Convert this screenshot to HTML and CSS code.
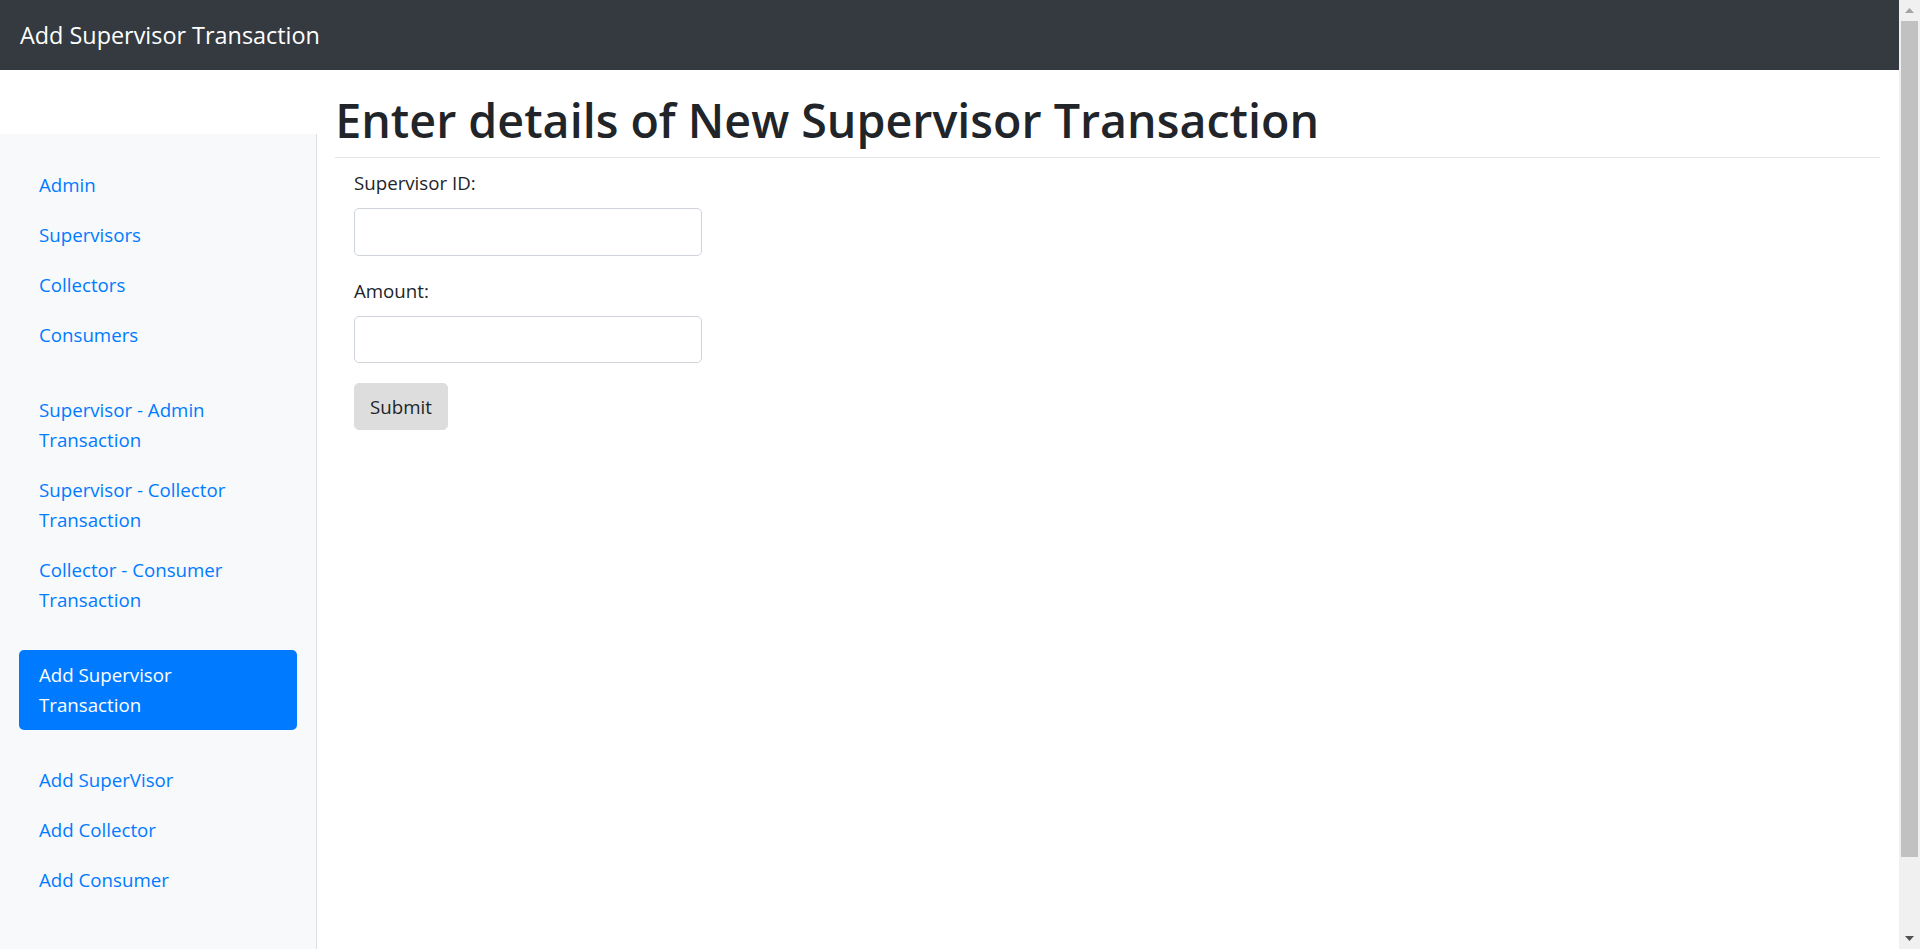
FILE: index.html
```html
<!DOCTYPE html>
<html lang="en">
<head>
<meta charset="utf-8">
<title>Add Supervisor Transaction</title>
<link rel="stylesheet" href="styles.css">
</head>
<body>
<nav class="navbar">
  <a class="brand" href="#">Add Supervisor Transaction</a>
</nav>
<div class="layout">
  <aside class="sidebar">
    <ul class="nav-group">
      <li><a class="nav-link" href="#">Admin</a></li>
      <li><a class="nav-link" href="#">Supervisors</a></li>
      <li><a class="nav-link" href="#">Collectors</a></li>
      <li><a class="nav-link" href="#">Consumers</a></li>
    </ul>
    <ul class="nav-group">
      <li><a class="nav-link" href="#">Supervisor - Admin<br>Transaction</a></li>
      <li><a class="nav-link" href="#">Supervisor - Collector<br>Transaction</a></li>
      <li><a class="nav-link" href="#">Collector - Consumer<br>Transaction</a></li>
    </ul>
    <ul class="nav-group">
      <li><a class="nav-link active" href="#">Add Supervisor<br>Transaction</a></li>
    </ul>
    <ul class="nav-group">
      <li><a class="nav-link" href="#">Add SuperVisor</a></li>
      <li><a class="nav-link" href="#">Add Collector</a></li>
      <li><a class="nav-link" href="#">Add Consumer</a></li>
    </ul>
    <ul class="nav-group last">
      <li><a class="nav-link" href="#">Logout</a></li>
    </ul>
  </aside>
  <main class="main">
    <h1 class="page-title">Enter details of New Supervisor Transaction</h1>
    <form class="form">
      <div class="form-group">
        <label class="label" for="sid">Supervisor ID:</label>
        <input class="input" id="sid" type="text">
      </div>
      <div class="form-group">
        <label class="label" for="amount">Amount:</label>
        <input class="input" id="amount" type="text">
      </div>
      <button class="btn" type="submit">Submit</button>
    </form>
  </main>
</div>
<div class="scrollbar" aria-hidden="true">
  <div class="sb-button">
    <svg width="9" height="5" viewBox="0 0 9 5"><polygon points="0,5 4.5,0 9,5" fill="#a3a3a3"/></svg>
  </div>
  <div class="sb-track">
    <div class="sb-thumb"></div>
  </div>
  <div class="sb-button">
    <svg width="9" height="5" viewBox="0 0 9 5"><polygon points="0,0 9,0 4.5,5" fill="#505050"/></svg>
  </div>
</div>
</body>
</html>
```

FILE: styles.css
```css
body {
  margin: 0 21px 0 0;
  font-family: "Open Sans", "Noto Sans", sans-serif;
  font-size: 18.7px;
  line-height: 30px;
  color: #212529;
  background: #fff;
}

.navbar {
  height: 70px;
  background: #343a40;
  display: flex;
  align-items: center;
  padding: 0 20px;
}
.brand {
  color: #fff;
  text-decoration: none;
  font-size: 23.4px;
  line-height: 36px;
}

.layout {
  display: flex;
  align-items: flex-start;
}

.sidebar {
  flex: 0 0 316.5px;
  box-sizing: border-box;
  margin-top: 64px;
  padding: 26px 19.5px 48px 19px;
  background: #f8f9fa;
  box-shadow: inset -1px 0 0 rgba(0, 0, 0, 0.1);
}
.nav-group {
  list-style: none;
  margin: 0 0 25px;
  padding: 0;
}
.nav-group.last {
  margin-bottom: 0;
}
.nav-link {
  display: block;
  padding: 10px 20px;
  line-height: 30px;
  color: #007bff;
  text-decoration: none;
  border-radius: 5px;
}
.nav-link.active {
  background: #007bff;
  color: #fff;
}

.main {
  flex: 1;
  min-width: 0;
  padding: 0 18.75px;
}
.page-title {
  margin: 20px 0 10px;
  padding-bottom: 7px;
  border-bottom: 1px solid #e3e5e8;
  font-size: 46.6px;
  font-weight: 600;
  line-height: 60px;
  color: #212529;
}

.form {
  padding: 0 18.75px;
}
.form-group {
  margin-bottom: 20px;
}
.label {
  display: block;
  margin-bottom: 10px;
  line-height: 30px;
}
.input {
  display: block;
  box-sizing: border-box;
  width: 348px;
  height: 47.5px;
  padding: 7.5px 15px;
  border: 1px solid #ced4da;
  border-radius: 5px;
  font: inherit;
  color: #495057;
  background: #fff;
}
.btn {
  display: inline-block;
  padding: 7.5px 15px;
  border: 1px solid #dddddd;
  border-radius: 5px;
  background: #dddddd;
  color: #212529;
  font: inherit;
  line-height: 30px;
}

.scrollbar {
  position: fixed;
  top: 0;
  right: 0;
  bottom: 0;
  width: 21px;
  background: #f0f0f0;
  display: flex;
  flex-direction: column;
}
.sb-button {
  flex: 0 0 21px;
  display: flex;
  align-items: center;
  justify-content: center;
}
.sb-button svg {
  display: block;
}
.sb-track {
  flex: 1;
  padding: 0 2px;
}
.sb-thumb {
  height: 836px;
  background: #c1c1c1;
}
```
